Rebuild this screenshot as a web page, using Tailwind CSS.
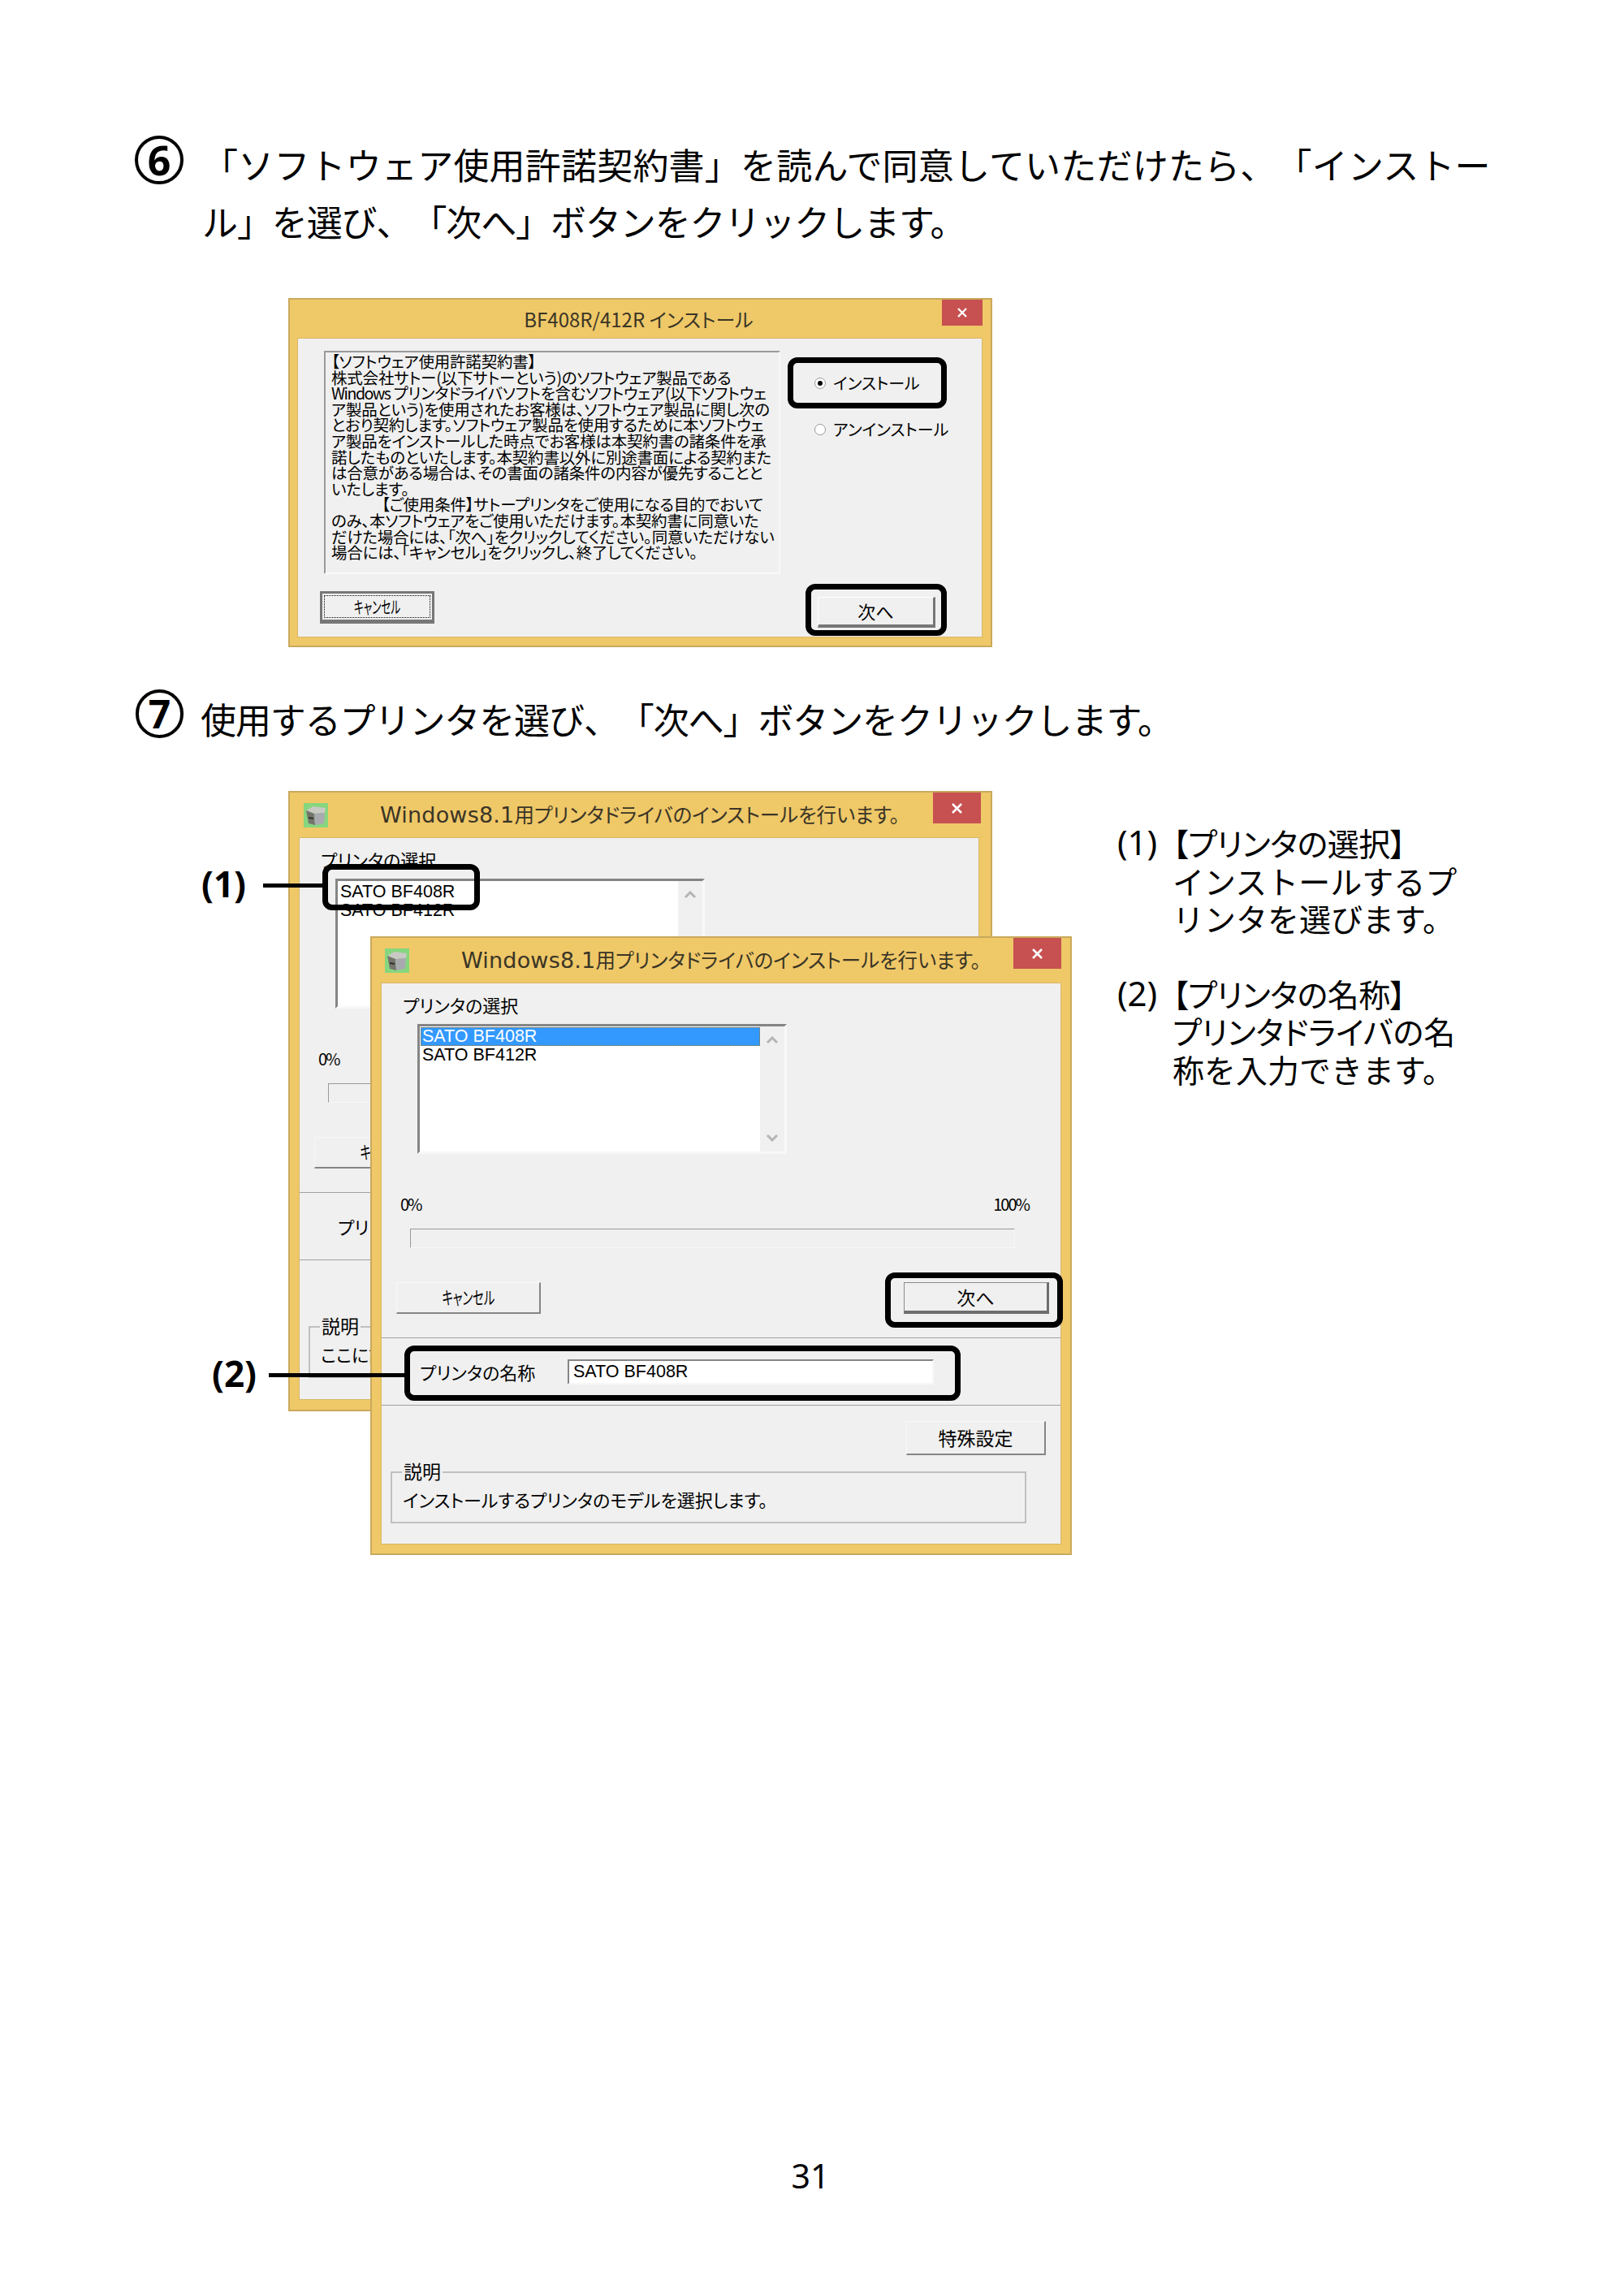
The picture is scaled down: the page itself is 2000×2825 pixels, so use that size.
<!DOCTYPE html>
<html lang="ja">
<head>
    <meta charset="UTF-8">
    <meta name="viewport" content="width=device-width, initial-scale=1.0">
    <title>31</title>
    <script src="https://cdn.jsdelivr.net/npm/@tailwindcss/browser@4"></script>
</head>
<body class="bg-white text-black font-['Noto_Sans_CJK_JP',sans-serif]">
<main class="w-[2000px] h-[2825px] pt-[167px] overflow-hidden">

    <!-- step 6 -->
    <section class="flex pl-[166px]">
        <div class="w-[60px] h-[60px] shrink-0 rounded-full border-[4px] border-black flex items-center justify-center font-bold text-[50px] leading-none font-['Noto_Sans',sans-serif]">6</div>
        <p class="ml-[23px] w-[1620px] text-[44px] leading-[70px] [text-spacing-trim:space-all]"><span class="tracking-[0.2px]">「ソフトウェア使用許諾契約書」を読んで同意していただけたら、「インストー</span><br><span class="tracking-[-1.1px]">ル」を選び、「次へ」ボタンをクリックします。</span></p>
    </section>

    <!-- license dialog -->
    <div class="relative ml-[355px] mt-[60px] w-[867px] h-[430px] border-2 border-[#c9a95c] bg-[#efc868] [font-feature-settings:'palt']">
        <div class="relative h-[47px] flex items-center justify-center text-[#3a3526] text-[24px] pr-[4px]">BF408R/412R インストール
            <span class="absolute right-[10px] top-0 w-[50px] h-[32px] bg-[#c75050] flex items-center justify-center">
                <svg width="14" height="12" viewBox="0 0 14 12"><path d="M2 1l10 10M12 1L2 11" stroke="#fff" stroke-width="2.4" fill="none"/></svg>
            </span>
        </div>
        <div class="ml-[9px] w-[844px] h-[369px] bg-[#f0f0f0] border border-[#d8b766]">
            <div class="flex pl-[32px] pt-[15px]">
                <div class="w-[562px] h-[275px] border-2 border-[#f8f8f8] border-t-[#9a9a9a] border-l-[#9a9a9a] pl-[7px] pt-[1px] text-[19.5px] leading-[19.6px] tracking-[-0.2px] whitespace-nowrap [text-spacing-trim:space-all]">
                    【ソフトウェア使用許諾契約書】<br>
                    株式会社サトー(以下サトーという)のソフトウェア製品である<br>
                    <span class="tracking-[-1.5px]">Windows</span> プリンタドライバソフトを含むソフトウェア(以下ソフトウェ<br>
                    ア製品という)を使用されたお客様は、ソフトウェア製品に関し次の<br>
                    とおり契約します。ソフトウェア製品を使用するために本ソフトウェ<br>
                    ア製品をインストールした時点でお客様は本契約書の諸条件を承<br>
                    諾したものといたします。本契約書以外に別途書面による契約また<br>
                    は合意がある場合は、その書面の諸条件の内容が優先することと<br>
                    いたします。<br>
                    <span class="ml-[62px]">【ご使用条件】サトープリンタをご使用になる目的でおいて</span><br>
                    のみ、本ソフトウェアをご使用いただけます。本契約書に同意いた<br>
                    だけた場合には、「次へ」をクリックしてください。同意いただけない<br>
                    場合には、「キャンセル」をクリックし、終了してください。
                </div>
                <div class="ml-[42px] pt-[28px] text-[20px]">
                    <div class="flex items-center h-[24px]">
                        <span class="w-[14px] h-[14px] rounded-full border border-[#999] bg-white flex items-center justify-center"><span class="w-[6px] h-[6px] rounded-full bg-black"></span></span>
                        <span class="ml-[9px]">インストール</span>
                    </div>
                    <div class="flex items-center h-[24px] mt-[33px]">
                        <span class="w-[14px] h-[14px] rounded-full border border-[#999] bg-white"></span>
                        <span class="ml-[9px]">アンインストール</span>
                    </div>
                </div>
            </div>
            <div class="flex justify-between items-start pl-[27px] pr-[57px] mt-[21px]">
                <div class="w-[141px] h-[40px] border-[3px] border-[#777] border-b-[5px] bg-[#f0f0f0] p-[2px]">
                    <div class="h-full border border-dotted border-black flex items-center justify-center text-[21px]"><span class="inline-block scale-x-[0.6]">キャンセル</span></div>
                </div>
                <div class="mt-[7px] w-[145px] h-[38px] border border-white border-r-[3px] border-b-[4px] border-r-[#777] border-b-[#777] flex items-center justify-center text-[22px]">次へ</div>
            </div>
        </div>
        <div class="absolute left-[613px] top-[71px] w-[196px] h-[63px] border-[7px] border-black rounded-[12px]"></div>
        <div class="absolute left-[635px] top-[350px] w-[174px] h-[64px] border-[7px] border-black rounded-[12px]"></div>
    </div>

    <!-- step 7 -->
    <section class="flex pl-[167px] mt-[52px]">
        <div class="w-[59px] h-[60px] shrink-0 rounded-full border-[4px] border-black flex items-center justify-center font-bold text-[48px] leading-none font-['Noto_Sans',sans-serif]">7</div>
        <p class="ml-[21px] mt-[1px] text-[44px] leading-[70px] tracking-[-1.1px] [text-spacing-trim:space-all]">使用するプリンタを選び、「次へ」ボタンをクリックします。</p>
    </section>

    <!-- printer dialogs and callouts -->
    <div class="relative mt-[54px] h-[941px]">

        <!-- back window -->
        <div class="absolute left-[355px] top-0 w-[867px] h-[764px] border-2 border-[#c9a95c] bg-[#efc868] [font-feature-settings:'palt']">
            <div class="relative h-[55px] flex items-center text-[#3a3526] text-[24.5px]">
                <svg class="ml-[17px]" width="30" height="30" viewBox="0 0 30 30"><rect width="30" height="30" fill="#86d67e"/><path d="M3 9 12 4l15 2-1 6-13 1z" fill="#c9c9c4"/><path d="M3 9l10 4 1 14-8-2z" fill="#75756c"/><path d="M13 13l13-1-1 13-11 2z" fill="#a9a9b0"/><path d="M6 17l6 1v2l-6-1z" fill="#2f2f2a"/></svg>
                <span class="ml-[64px] whitespace-nowrap"><span class="font-['DejaVu_Sans',sans-serif] text-[27px] leading-none tracking-[0.2px]">Windows8.1</span>用プリンタドライバのインストールを行います。</span>
                <span class="absolute right-[12px] top-0 w-[59px] h-[38px] bg-[#c75050] flex items-center justify-center">
                    <svg width="15" height="13" viewBox="0 0 15 13"><path d="M2 1l11 11M13 1 2 12" stroke="#fff" stroke-width="2.6" fill="none"/></svg>
                </span>
            </div>
            <div class="ml-[11px] w-[838px] h-[693px] bg-[#f0f0f0] border border-[#d8b766] text-[22px]">
                <p class="ml-[26px] mt-[13px] h-[26px] leading-[26px]">プリンタの選択</p>
                <div class="ml-[44px] mt-[11px] w-[455px] h-[160px] flex border-[3px] border-[#f8f8f8] border-t-[#858585] border-l-[#858585] bg-white">
                    <div class="flex-1 pt-[2px] pl-[3px] font-['Liberation_Sans',sans-serif] text-[21.5px] leading-[22px]">
                        <div class="h-[23px]">SATO BF408R</div>
                        <div class="h-[22px]">SATO BF412R</div>
                    </div>
                    <div class="w-[30px] bg-[#f0f0f0] flex flex-col items-center justify-between py-[12px]">
                        <svg width="16" height="10" viewBox="0 0 16 10"><path d="M2 8l6-6 6 6" stroke="#b5b5b5" stroke-width="3" fill="none"/></svg>
                        <svg width="16" height="10" viewBox="0 0 16 10"><path d="M2 2l6 6 6-6" stroke="#b5b5b5" stroke-width="3" fill="none"/></svg>
                    </div>
                </div>
                <div class="ml-[23px] mt-[50px] w-[774px] h-[24px] flex justify-between items-center text-[20px] tracking-[-2px] leading-none"><span>0%</span><span>100%</span></div>
                <div class="ml-[35px] mt-[18px] w-[745px] h-[24px] border border-[#f8f8f8] border-t-[#9a9a9a] border-l-[#9a9a9a]"></div>
                <div class="flex justify-between mt-[42px] ml-[18px] mr-[14px]">
                    <div class="w-[178px] h-[39px] pb-[3px] border border-[#f8f8f8] border-r-2 border-b-2 border-r-[#858585] border-b-[#858585] flex items-center justify-center"><span class="inline-block scale-x-[0.65]">キャンセル</span></div>
                    <div class="w-[179px] h-[39px] border border-[#8a8a8a] border-r-[3px] border-b-[4px] border-r-[#6e6e6e] border-b-[#6e6e6e] flex items-center justify-center text-[23px]">次へ</div>
                </div>
                <div class="mt-[29px] h-[84px] border-y border-[#a0a0a0] flex items-center">
                    <span class="ml-[47px] w-[182px]">プリンタの名称</span>
                    <span class="w-[451px] h-[31px] border-2 border-[#f8f8f8] border-t-[#858585] border-l-[#858585] bg-white pl-[5px] font-['Liberation_Sans',sans-serif] text-[21.5px] leading-[26px]">SATO BF408R</span>
                </div>
                <div class="flex justify-end mt-[19px] mr-[18px]">
                    <div class="w-[172px] h-[42px] border border-[#f8f8f8] border-r-2 border-b-2 border-r-[#858585] border-b-[#858585] flex items-center justify-center text-[23px]">特殊設定</div>
                </div>
                <div class="relative ml-[11px] mt-[20px] w-[783px] h-[64px] border-2 border-[#c0c0c0] pl-[13px] pt-[16px]">
                    <span class="absolute left-[12px] -top-[16px] px-[2px] bg-[#f0f0f0] leading-[26px] text-[23px]">説明</span>
                    ここに説明が表示されます。
                </div>
            </div>
        </div>

        <!-- front window -->
        <div class="absolute left-[456px] top-[179px] w-[864px] h-[762px] border-2 border-[#c9a95c] bg-[#efc868] [font-feature-settings:'palt']">
            <div class="relative h-[55px] flex items-center text-[#3a3526] text-[24.5px]">
                <svg class="ml-[16px]" width="30" height="30" viewBox="0 0 30 30"><rect width="30" height="30" fill="#86d67e"/><path d="M3 9 12 4l15 2-1 6-13 1z" fill="#c9c9c4"/><path d="M3 9l10 4 1 14-8-2z" fill="#75756c"/><path d="M13 13l13-1-1 13-11 2z" fill="#a9a9b0"/><path d="M6 17l6 1v2l-6-1z" fill="#2f2f2a"/></svg>
                <span class="ml-[64px] whitespace-nowrap"><span class="font-['DejaVu_Sans',sans-serif] text-[27px] leading-none tracking-[0.2px]">Windows8.1</span>用プリンタドライバのインストールを行います。</span>
                <span class="absolute right-[11px] top-0 w-[59px] h-[38px] bg-[#c75050] flex items-center justify-center">
                    <svg width="15" height="13" viewBox="0 0 15 13"><path d="M2 1l11 11M13 1 2 12" stroke="#fff" stroke-width="2.6" fill="none"/></svg>
                </span>
            </div>
            <div class="ml-[11px] w-[838px] h-[692px] bg-[#f0f0f0] border border-[#d8b766] text-[22px]">
                <p class="ml-[26px] mt-[13px] h-[26px] leading-[26px]">プリンタの選択</p>
                <div class="ml-[44px] mt-[11px] w-[455px] h-[160px] flex border-[3px] border-[#f8f8f8] border-t-[#858585] border-l-[#858585] bg-white">
                    <div class="flex-1 pt-[1px] pl-[1px] font-['Liberation_Sans',sans-serif] text-[21.5px] leading-[22px]">
                        <div class="h-[23px] pl-[2px] bg-[#3399ff] text-white outline-1 outline-dotted outline-[#a07020] -outline-offset-1">SATO BF408R</div>
                        <div class="h-[22px] pl-[2px]">SATO BF412R</div>
                    </div>
                    <div class="w-[30px] bg-[#f0f0f0] flex flex-col items-center justify-between py-[12px]">
                        <svg width="16" height="10" viewBox="0 0 16 10"><path d="M2 8l6-6 6 6" stroke="#b5b5b5" stroke-width="3" fill="none"/></svg>
                        <svg width="16" height="10" viewBox="0 0 16 10"><path d="M2 2l6 6 6-6" stroke="#b5b5b5" stroke-width="3" fill="none"/></svg>
                    </div>
                </div>
                <div class="ml-[23px] mt-[50px] w-[774px] h-[24px] flex justify-between items-center text-[20px] tracking-[-2px] leading-none"><span>0%</span><span>100%</span></div>
                <div class="ml-[35px] mt-[18px] w-[745px] h-[24px] border border-[#f8f8f8] border-t-[#9a9a9a] border-l-[#9a9a9a]"></div>
                <div class="flex justify-between mt-[42px] ml-[18px] mr-[14px]">
                    <div class="w-[178px] h-[39px] pb-[3px] border border-[#f8f8f8] border-r-2 border-b-2 border-r-[#858585] border-b-[#858585] flex items-center justify-center"><span class="inline-block scale-x-[0.65]">キャンセル</span></div>
                    <div class="w-[179px] h-[39px] border border-[#8a8a8a] border-r-[3px] border-b-[4px] border-r-[#6e6e6e] border-b-[#6e6e6e] flex items-center justify-center text-[23px]">次へ</div>
                </div>
                <div class="mt-[29px] h-[84px] border-y border-[#a0a0a0] flex items-center">
                    <span class="ml-[47px] w-[182px]">プリンタの名称</span>
                    <span class="w-[451px] h-[31px] border-2 border-[#f8f8f8] border-t-[#858585] border-l-[#858585] bg-white pl-[5px] font-['Liberation_Sans',sans-serif] text-[21.5px] leading-[26px]">SATO BF408R</span>
                </div>
                <div class="flex justify-end mt-[19px] mr-[18px]">
                    <div class="w-[172px] h-[42px] border border-[#f8f8f8] border-r-2 border-b-2 border-r-[#858585] border-b-[#858585] flex items-center justify-center text-[23px]">特殊設定</div>
                </div>
                <div class="relative ml-[11px] mt-[20px] w-[783px] h-[64px] border-2 border-[#c0c0c0] pl-[13px] pt-[16px]">
                    <span class="absolute left-[12px] -top-[16px] px-[2px] bg-[#f0f0f0] leading-[26px] text-[23px]">説明</span>
                    インストールするプリンタのモデルを選択します。
                </div>
            </div>
        </div>

        <!-- callouts -->
        <div class="absolute left-[397px] top-[90px] w-[194px] h-[57px] border-[7px] border-black rounded-[12px]"></div>
        <div class="absolute left-[324px] top-[114px] w-[73px] h-[5px] bg-black"></div>
        <span class="absolute left-[248px] top-[88px] text-[44px] leading-[52px] font-bold font-['Noto_Sans',sans-serif]">(1)</span>
        <div class="absolute left-[1090px] top-[593px] w-[219px] h-[68px] border-[7px] border-black rounded-[12px]"></div>
        <div class="absolute left-[498px] top-[683px] w-[685px] h-[68px] border-[7px] border-black rounded-[12px]"></div>
        <div class="absolute left-[331px] top-[717px] w-[167px] h-[5px] bg-black"></div>
        <span class="absolute left-[261px] top-[691px] text-[44px] leading-[52px] font-bold font-['Noto_Sans',sans-serif]">(2)</span>

        <!-- notes -->
        <div class="absolute left-[1376px] top-[40px] w-[450px] text-[39px] leading-[46.5px] whitespace-nowrap">
            <div class="flex">
                <span class="w-[68px] text-[42px] font-['Noto_Sans',sans-serif]">(1)</span>
                <div><span class="[font-feature-settings:'palt'] tracking-[-0.5px]">【プリンタの選択】</span><br>インストールするプ<br>リンタを選びます。</div>
            </div>
            <div class="flex mt-[46px]">
                <span class="w-[68px] text-[42px] font-['Noto_Sans',sans-serif]">(2)</span>
                <div><span class="[font-feature-settings:'palt'] tracking-[-0.5px]">【プリンタの名称】</span><br><span class="[font-feature-settings:'palt']">プリンタドライバの名</span><br>称を入力できます。</div>
            </div>
        </div>
    </div>

    <p class="mt-[739px] w-[1996px] text-center text-[41px] leading-[50px] font-['Noto_Sans',sans-serif]">31</p>
</main>
</body>
</html>
